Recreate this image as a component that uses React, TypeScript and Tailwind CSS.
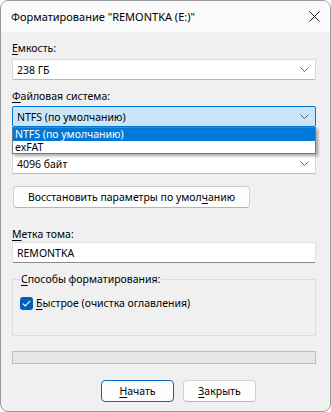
import React from 'react';

const u = (s: string) => <span className="underline underline-offset-[2px]">{s}</span>;

function Chevron() {
  return (
    <svg width="9" height="5" viewBox="0 0 9 5" className="shrink-0">
      <path d="M0.5 0.5 L4.5 4.5 L8.5 0.5" fill="none" stroke="#5f5f5f" strokeWidth="1" />
    </svg>
  );
}

function Combo({ value, active }: { value: string; active?: boolean }) {
  return (
    <div
      className={`h-[21px] w-[304px] flex items-center justify-between pl-[4px] pr-[6px] rounded-[2px] border ${
        active ? 'bg-[#cce4f7] border-[#0078d7]' : 'bg-white border-[#dadada] border-b-[#b8b8b8]'
      }`}
    >
      <span>{value}</span>
      <Chevron />
    </div>
  );
}

function App() {
  return (
    <div className="w-[331px] h-[412px] bg-[#f0f0f0] border border-[#9a9a9a] rounded-[8px] overflow-hidden flex flex-col text-[10.5px] leading-[16px] text-black font-['Noto_Sans',sans-serif]">
      {/* Title bar */}
      <div className="h-[31px] shrink-0 bg-[#fafafa] flex items-center justify-between pl-[10px] pr-[10px]">
        <span className="text-[11px]">Форматирование "REMONTKA (E:)"</span>
        <svg width="11" height="11" viewBox="0 0 11 11">
          <path d="M0.5 0.5 L10.5 10.5 M10.5 0.5 L0.5 10.5" stroke="#1a1a1a" strokeWidth="1" />
        </svg>
      </div>

      <div className="flex flex-col pl-[11px] relative">
        <div className="mt-[8px] h-[16px]">{u('Е')}мкость:</div>
        <div className="mt-[3px]">
          <Combo value="238 ГБ" />
        </div>

        <div className="mt-[8px] h-[16px]">{u('Ф')}айловая система:</div>
        <div className="mt-[2px] relative">
          <Combo value="NTFS (по умолчанию)" active />
          {/* open dropdown list */}
          <div className="absolute left-0 top-[21px] w-[304px] z-10 bg-white border border-[#7a7a7a] shadow-[2px_2px_3px_rgba(0,0,0,0.35)]">
            <div className="h-[13px] leading-[13px] bg-[#0078d7] text-white pl-[2px]">NTFS (по умолчанию)</div>
            <div className="h-[12px] leading-[12px] pl-[2px]">exFAT</div>
          </div>
        </div>

        {/* label hidden under the open list */}
        <div className="mt-[6px] h-[16px]" />
        <div className="mt-[4px]">
          <Combo value="4096 байт" />
        </div>

        <button className="mt-[12px] ml-[1px] w-[237px] h-[22px] rounded-[4px] bg-[#fdfdfd] border border-[#d0d0d0] border-b-[#b5b5b5] text-[10.5px] text-black">
          Восстановить параметры по умол{u('ч')}анию
        </button>

        <div className="mt-[18px] h-[16px]">{u('М')}етка тома:</div>
        <div className="h-[21px] w-[304px] bg-white border border-[#e0e0e0] border-b-[#8a8a8a] rounded-[2px] flex items-center pl-[4px]">
          REMONTKA
        </div>

        <fieldset className="mt-[10px] w-[304px] h-[63px] border border-[#dcdcdc] rounded-[1px] px-[7px] m-0 min-w-0">
          <legend className="px-[1px] leading-[12px] ml-0">{u('С')}пособы форматирования:</legend>
          <div className="mt-[10px] flex items-center gap-[3px]">
            <span className="w-[13px] h-[13px] rounded-[3px] bg-[#005fb8] flex items-center justify-center">
              <svg width="9" height="7" viewBox="0 0 9 7">
                <path d="M0.8 3.6 L3.3 6 L8.2 0.9" fill="none" stroke="white" strokeWidth="1.1" />
              </svg>
            </span>
            <span>{u('Б')}ыстрое (очистка оглавления)</span>
          </div>
        </fieldset>

        <div className="mt-[15px] w-[304px] h-[13px] bg-[#e6e6e6] border border-[#bcbcbc]" />

        <div className="mt-[16px] ml-[89px] flex gap-[9px]">
          <button className="w-[73px] h-[22px] rounded-[4px] bg-[#fdfdfd] border border-[#0067c0] text-[10.5px] text-black">
            {u('Н')}ачать
          </button>
          <button className="w-[73px] h-[22px] rounded-[4px] bg-[#fdfdfd] border border-[#d0d0d0] border-b-[#b5b5b5] text-[10.5px] text-black">
            {u('З')}акрыть
          </button>
        </div>
      </div>
    </div>
  );
}

export default App;
